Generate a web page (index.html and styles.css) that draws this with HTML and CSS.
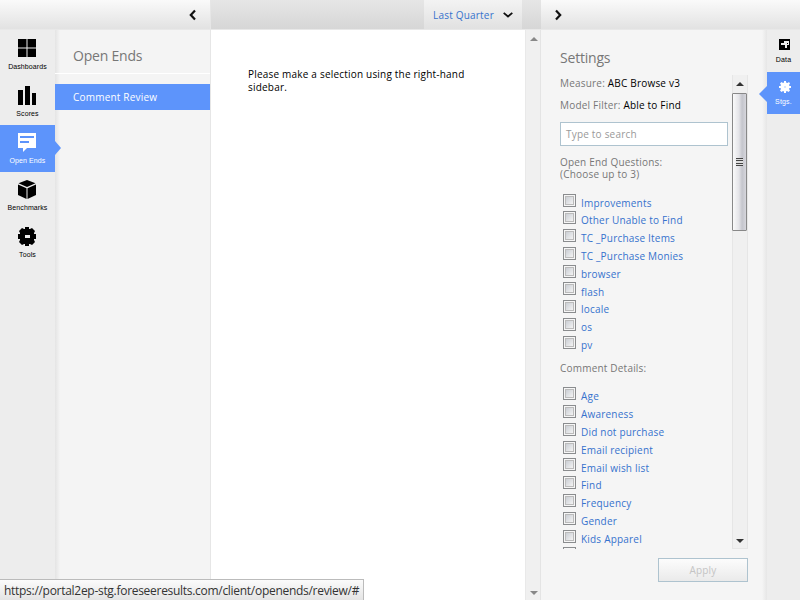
FILE: index.html
```
<!DOCTYPE html>
<html lang="en">
<head>
<meta charset="utf-8">
<title>Open Ends</title>
<link rel="stylesheet" href="styles.css">
</head>
<body>
<div class="app">
  <section class="left">
    <header class="bar bar-left">
      <svg class="chev-left" width="7" height="12" viewBox="0 0 7 12"><path d="M6 1.5 1.8 6 6 10.5" fill="none" stroke="#111" stroke-width="2.2"/></svg>
    </header>
    <div class="body">
      <nav class="rail">
        <a class="item"><svg width="18" height="19" viewBox="0 0 18 19"><path d="M0 0h8.500v8.500H0zM9.500 0H18v8.500H9.500zM0 9.500h8.500V18H0zM9.500 9.500H18V18H9.500z"/></svg><span>Dashboards</span></a>
        <a class="item"><svg width="18" height="19" viewBox="0 0 18 19"><path d="M0 4h5v15H0zM7 0h5v19H7zM14 7h4v12h-4z"/></svg><span>Scores</span></a>
        <a class="item active"><svg width="18" height="19" viewBox="0 0 18 19"><path fill="#fff" d="M0 0h18v15H9l-4 4v-4H0z"/><path fill="#5d94fb" d="M2 3h14v2H2zM2 8h9v2H2z"/></svg><span>Open Ends</span></a>
        <a class="item"><svg width="18" height="19" viewBox="0 0 18 19"><path d="M9 0l8.500 3.300L9 7 .5 3.300zM0 4.500l8.500 3.700V19L0 15zM18 4.500L9.500 8.200V19l8.500-4z"/></svg><span>Benchmarks</span></a>
        <a class="item"><svg width="18" height="19" viewBox="0 0 18 19"><path fill-rule="evenodd" d="M7 0h4v2h1l2-1 3 3-1 2v1h2v5h-2v1l1 2-3 3-2-1h-1v2H7v-2H6l-2 1-3-3 1-2v-1H0V7h2V6L1 4l3-3 2 1h1zM7 8v3h5V8z"/></svg><span>Tools</span></a>
      </nav>
      <div class="menu">
        <h1>Open Ends</h1>
        <a class="selected"><span>Comment Review</span></a>
      </div>
    </div>
  </section>
  <main class="main">
    <header class="bar bar-main">
      <div class="period"><span class="period-name">Last Quarter</span><svg width="10" height="6" viewBox="0 0 10 6"><path d="M.7.900 5 4.500 9.300.9" fill="none" stroke="#111" stroke-width="1.800"/></svg></div>
    </header>
    <div class="content">
      <p><span class="l1">Please make a selection using the right-hand</span><br><span class="l2">sidebar.</span></p>
      <div class="page-scroll"><i class="up"></i><i class="down"></i></div>
    </div>
  </main>
  <section class="right">
    <header class="bar bar-right">
      <svg width="7" height="12" viewBox="0 0 7 12"><path d="M1 1.500 5.200 6 1 10.500" fill="none" stroke="#111" stroke-width="2.200"/></svg>
    </header>
    <div class="body">
      <div class="settings">
        <h2>Settings</h2>
        <div class="scroller">
          <div class="form">
            <p class="fact measure"><span class="k">Measure:</span> <b>ABC Browse v3</b></p>
            <p class="fact filter"><span class="k">Model Filter:</span> <b>Able to Find</b></p>
            <div class="search"><span>Type to search</span></div>
            <p class="group">Open End Questions:<br>(Choose up to 3)</p>
            <ul class="questions">
              <li><i></i><span>Improvements</span></li>
              <li><i></i><span>Other Unable to Find</span></li>
              <li><i></i><span>TC _Purchase Items</span></li>
              <li><i></i><span>TC _Purchase Monies</span></li>
              <li><i></i><span>browser</span></li>
              <li><i></i><span>flash</span></li>
              <li><i></i><span>locale</span></li>
              <li><i></i><span>os</span></li>
              <li><i></i><span>pv</span></li>
            </ul>
            <p class="group details">Comment Details:</p>
            <ul>
              <li><i></i><span>Age</span></li>
              <li><i></i><span>Awareness</span></li>
              <li><i></i><span>Did not purchase</span></li>
              <li><i></i><span>Email recipient</span></li>
              <li><i></i><span>Email wish list</span></li>
              <li><i></i><span>Find</span></li>
              <li><i></i><span>Frequency</span></li>
              <li><i></i><span>Gender</span></li>
              <li><i></i><span>Kids Apparel</span></li>
              <li><i></i></li>
            </ul>
          </div>
          <div class="track"><i class="up"></i><div class="thumb"><em></em></div><i class="down"></i></div>
        </div>
        <div class="apply"><span>Apply</span></div>
      </div>
      <nav class="tabs">
        <a class="tab data"><svg width="11" height="11" viewBox="0 0 11 11"><path fill-rule="evenodd" d="M0 0h11v11H0zM2 4v2h4v3h2V6h2V2H5v2z"/><path d="M8 4h1v1H8z"/></svg><span>Data</span></a>
        <a class="tab on"><svg width="12" height="12" viewBox="0 0 12 12"><path fill="#fff" fill-rule="evenodd" d="M5 0h2v1.500l1.500.5L10 1l1 1.500L10 4l.5 1H12v2h-1.500L10 8l1 1.500L9.500 11 8 10l-1 .5V12H5v-1.500L4 10l-1.500 1L1 9.500 2 8l-.5-1H0V5h1.500L2 4 1 2.500 2.500 1 4 2l1-.5zM5.500 5.500v1h1v-1z"/></svg><span>Stgs.</span></a>
      </nav>
    </div>
  </section>
</div>
<div class="status"><span>https://portal2ep-stg.foreseeresults.com/client/openends/review/#</span></div>
</body>
</html>
```
FILE: styles.css
```
* { box-sizing: border-box; }
body { margin: 0; width: 800px; height: 600px; overflow: hidden; font: 10px/12px "Open Sans", sans-serif; letter-spacing: .2px; color: #000; background: #fff; }
h1, h2, p, ul { margin: 0; padding: 0; }
svg { display: block; flex: none; }
.app { display: grid; grid-template-columns: 210px 331px 259px; height: 600px; }
.left, .main, .right { display: flex; flex-direction: column; min-width: 0; height: 600px; }
.bar { height: 30px; flex: none; display: flex; background: linear-gradient(#fafafa, #e2e2e2); border-bottom: 1px solid #e8e8e8; }
.body { flex: 1; display: flex; min-height: 0; }

.bar-left { justify-content: flex-end; padding: 9px 14px 0 0; }
.rail { width: 55px; flex: none; background: #ededed; }
.item { position: relative; display: flex; flex-direction: column; align-items: center; height: 47px; padding-top: 8px; font: 7px/9px "Liberation Sans", sans-serif; letter-spacing: .1px; }
.item:first-child { height: 48px; padding-top: 9px; }
.item svg { margin-right: 1px; }
.item span { margin-top: 4px; white-space: nowrap; }
.item.active { background: #5d94fb; color: #fff; }
.item.active::after { content: ""; position: absolute; left: 55px; top: 16px; border: 7px solid transparent; border-left: 6px solid #5d94fb; border-right: 0; }
.menu { flex: 1; background: linear-gradient(90deg, #e4e4e4, #f4f4f4 5px); }
.menu h1 { height: 44px; padding: 16px 0 0 18px; font-size: 14px; line-height: 20px; font-weight: 400; letter-spacing: -.2px; color: #777; border-bottom: 1px solid #fff; }
.selected { display: block; margin-top: 10px; height: 26px; padding: 7px 0 0 18px; background: #5d94fb; color: #fff; }

.main { border-left: 1px solid #e6e6e6; }
.bar-main { background: linear-gradient(#e6e6e6, #d6d6d6); padding-left: 213px; }
.period { width: 98px; padding-left: 9px; display: flex; background: linear-gradient(#f3f3f3, #e1e1e1); color: #3672cd; }
.period span { width: 70px; padding-top: 9px; }
.period svg { margin-top: 12px; }
.content { flex: 1; display: flex; justify-content: space-between; }
.content p { padding: 38px 0 0 37px; line-height: 13px; }
.page-scroll { width: 16px; padding: 7px 0 5px 4px; background: #f0f0f0; border-left: 1px solid #e9e9e9; border-right: 1px solid #e4e4e4; display: flex; flex-direction: column; justify-content: space-between; }
i.up, i.down { display: block; width: 0; height: 0; border: 4px solid transparent; }
i.up { border-top: 0; border-bottom-color: #888; }
i.down { border-bottom: 0; border-top-color: #888; }

.bar-right { padding: 9px 0 0 14px; }
.settings { width: 226px; background: linear-gradient(270deg, #e6e6e6, #f5f5f5 5px); padding-left: 19px; color: #777; }
.settings h2 { height: 45px; padding-top: 18px; font-size: 14px; line-height: 20px; font-weight: 400; letter-spacing: -.2px; }
.scroller { display: flex; height: 474px; overflow: hidden; }
.form { width: 172px; }
.fact { height: 23px; padding-top: 2px; white-space: nowrap; }
.filter { padding-top: 1px; }
.fact b { font-weight: 400; color: #000; }
.search { width: 168px; height: 24px; margin-top: 1px; padding: 5px; background: #fff; border: 1px solid #aec3cf; color: #999; }
.group { margin-top: 10px; height: 37.500px; }
.group.details { margin-top: 8px; height: 25.500px; }
ul { list-style: none; padding-left: 3px; }
li { display: flex; gap: 5px; height: 17.800px; color: #3672cd; white-space: nowrap; }
li i { flex: none; width: 13px; height: 13px; border: 1px solid #8a8c8e; background: linear-gradient(135deg, #cbcfd5, #f3f3f3) 2px 2px / 7px 7px no-repeat, #f4f4f4; box-shadow: inset 0 0 0 1px #f6f6f6, inset 0 0 0 2px #bbb; }
li span { padding-top: 3.200px; }
.track { width: 16px; height: 474px; border: solid #e6e6e6; border-width: 0 1px 1px; background: #f0f0f0; display: flex; flex-direction: column; padding-top: 7px; }
.track i { margin-left: 3px; }
.track i.up { border-bottom-color: #333; }
.track i.down { margin-top: auto; margin-bottom: 5px; border-top-color: #333; }
.thumb { width: 15px; height: 138px; margin: 7px 0 0 -1px; padding: 64px 0 0 3px; border: 1px solid #888; border-radius: 1px; background: linear-gradient(90deg, #fafafa, #e4e4e8 45%, #c4c5cc 70%, #d6d6dc); }
.thumb em { display: block; width: 7px; height: 8px; background: repeating-linear-gradient(#444 0 1px, #ddd 1px 2.300px); }
.apply { width: 90px; height: 24px; margin: 9px 0 0 98px; border: 1px solid #aec3cf; background: linear-gradient(#fcfcfc, #eaeaea); color: #c4c4c4; text-align: center; line-height: 23px; }
.tabs { width: 33px; background: #ededed; }
.tab { position: relative; display: flex; flex-direction: column; align-items: center; height: 42px; padding-top: 9px; font: 7px/9px "Liberation Sans", sans-serif; }
.tab svg { margin-left: 2px; }
.tab span { margin-top: 5px; }
.tab.on { background: #5d94fb; color: #fff; }
.tab.on span { margin-top: 4px; }
.tab.on::before { content: ""; position: absolute; left: -8px; top: 14px; border: 8px solid transparent; border-right: 8px solid #5d94fb; border-left: 0; }

.status { position: absolute; left: 0; bottom: 0; width: 364px; height: 21px; padding: 3px 4px; border: solid #bbb; border-width: 1px 1px 0 0; background: linear-gradient(#fbfbfb, #e4e4e4); color: #333; font: 12px/15px "Open Sans", sans-serif; letter-spacing: -.29px; white-space: nowrap; }
```
